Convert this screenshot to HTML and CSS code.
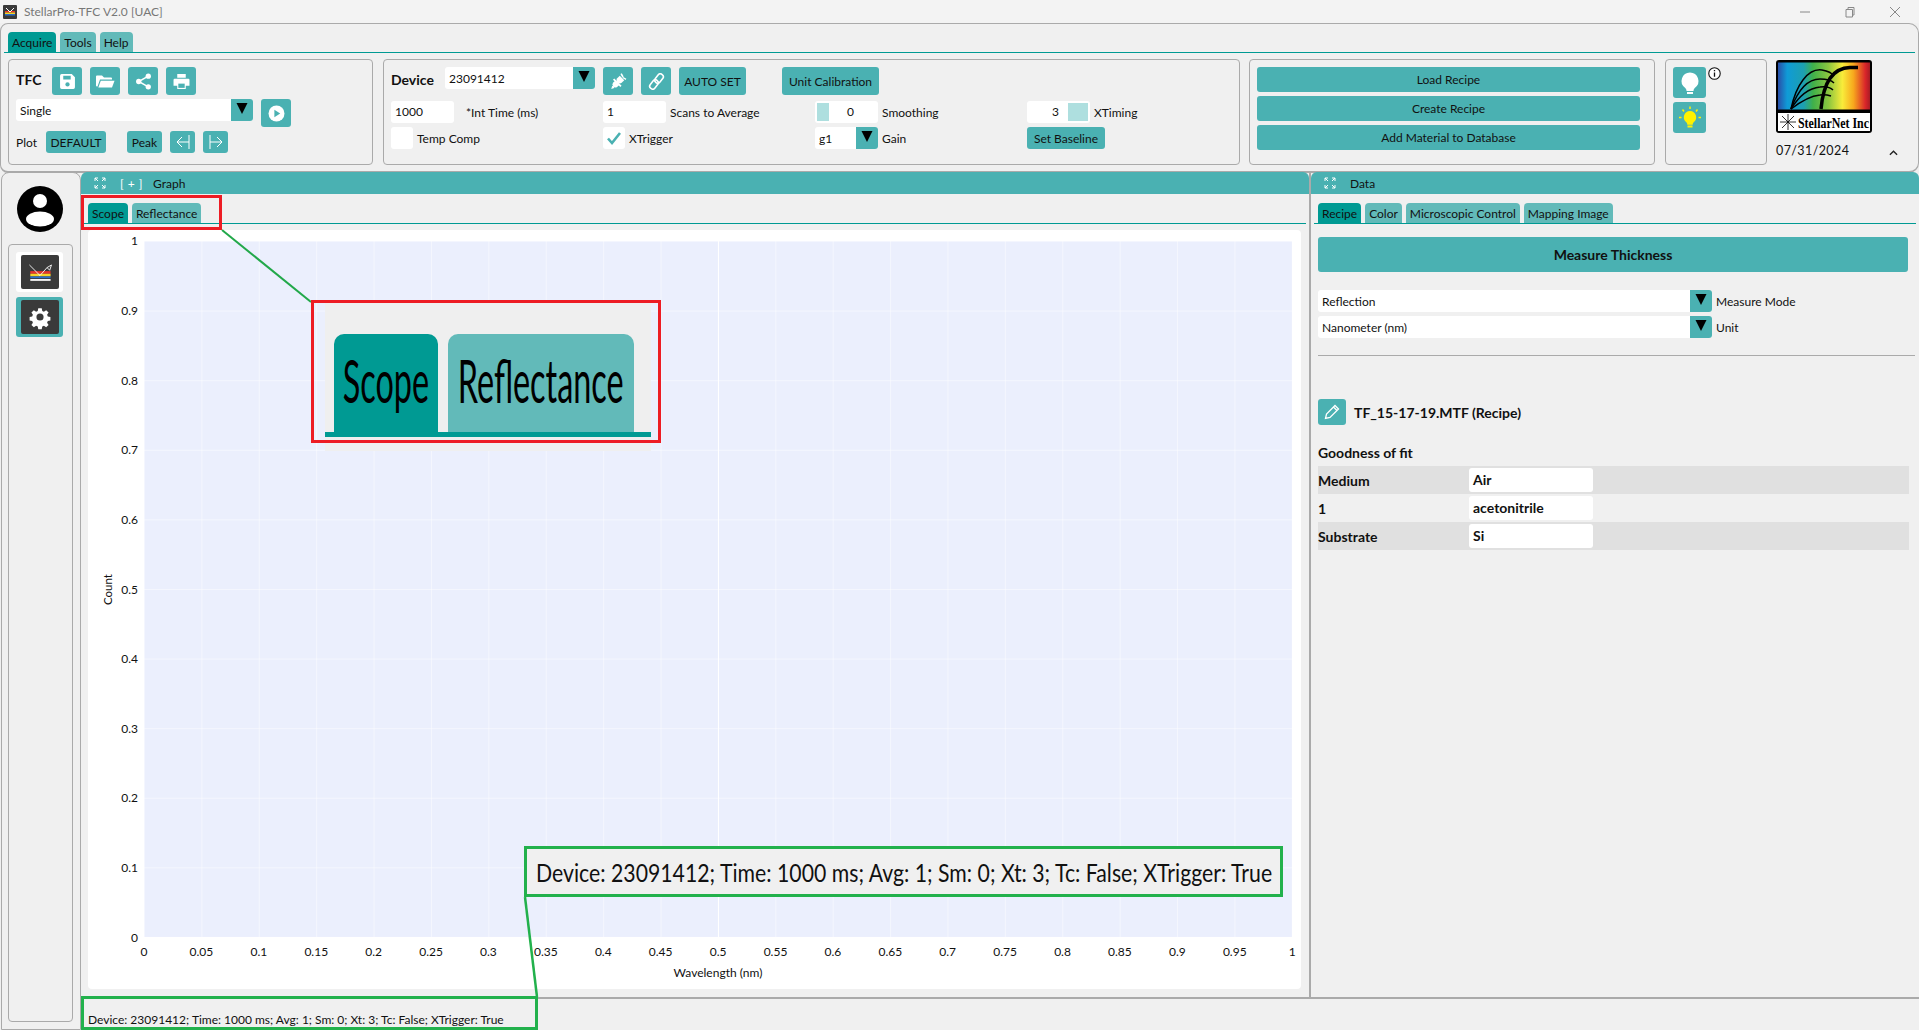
FILE: index.html
```html
<!DOCTYPE html>
<html lang="en">
<head>
    <meta charset="UTF-8">
    <title>StellarPro-TFC V2.0 [UAC]</title>
    <link rel="stylesheet" href="styles.css">
</head>
<body>
<svg class="defs" width="0" height="0">
    <symbol id="i-expand" viewBox="0 0 12 12">
        <path d="M1 4V1h3M8 1h3v3M1 8v3h3M11 8v3H8M1 1l3 3M11 1L8 4M1 11l3-3M11 11L8 8" fill="none" stroke="#fff" stroke-width="1"/>
    </symbol>
    <symbol id="i-down" viewBox="0 0 14 14">
        <path d="M1.500 2h11L7 13z" fill="#000"/>
    </symbol>
</svg>

<div class="titlebar">
    <svg class="app-icon" viewBox="0 0 14 14">
        <rect width="14" height="14" rx="1" fill="#3a3a3a"/>
        <rect x="2" y="6" width="10" height="1.500" fill="#e8352b"/>
        <rect x="2" y="7.500" width="10" height="1.500" fill="#f5d327"/>
        <rect x="2" y="9" width="10" height="1.500" fill="#2a6fc9"/>
        <path d="M3 3l4 4 4-4" fill="none" stroke="#fff" stroke-width="1"/>
    </svg>
    <span class="app-title">StellarPro-TFC V2.0 [UAC]</span>
    <div class="win-btns">
        <svg viewBox="0 0 12 12"><path d="M1 6h10" stroke="#888" fill="none"/></svg>
        <svg viewBox="0 0 12 12"><path d="M2 3.500h6.500V11H2zM4 3.500V1.500h6V9H8.500" stroke="#888" fill="none"/></svg>
        <svg viewBox="0 0 12 12"><path d="M1 1l10 10M11 1L1 11" stroke="#888" fill="none"/></svg>
    </div>
</div>

<div class="ribbon">
    <div class="tabbar ribbon-tabs">
        <div class="tab active">Acquire</div>
        <div class="tab">Tools</div>
        <div class="tab">Help</div>
    </div>
    <div class="ribbon-body">
        <!-- TFC group -->
        <div class="group group-tfc">
            <div class="row row-top">
                <span class="strong tfc-label">TFC</span>
                <button class="btn icon-btn"><svg viewBox="0 0 16 16"><path d="M1 2.500A1.500 1.500 0 0 1 2.500 1H12l3 3v9.500a1.500 1.500 0 0 1-1.500 1.500h-11A1.500 1.500 0 0 1 1 13.500zM4 2.500V6h7V2.500z" fill="#fff" fill-rule="evenodd"/><circle cx="8" cy="10.800" r="2" fill="#4ab1b2"/></svg></button>
                <button class="btn icon-btn"><svg class="wide" viewBox="0 0 20 16"><path d="M1 3a1 1 0 0 1 1-1h5l2 2h7a1 1 0 0 1 1 1v1H5L2.500 13H2a1 1 0 0 1-1-1z" fill="#fff"/><path d="M5.800 7.200H19.500L17 14H3.300z" fill="#fff"/></svg></button>
                <button class="btn icon-btn"><svg viewBox="0 0 16 16"><path d="M12.500 3L3.500 8l9 5" fill="none" stroke="#fff" stroke-width="1.400"/><circle cx="12.500" cy="3" r="2.500" fill="#fff"/><circle cx="3.500" cy="8" r="2.500" fill="#fff"/><circle cx="12.500" cy="13" r="2.500" fill="#fff"/></svg></button>
                <button class="btn icon-btn"><svg viewBox="0 0 16 16"><path d="M4 1h8v3.500H4zM1.500 5.500h13a1 1 0 0 1 1 1V12H12v3H4v-3H.5V6.500a1 1 0 0 1 1-1z" fill="#fff"/><rect x="5" y="10" width="6" height="4" fill="#4ab1b2"/></svg></button>
            </div>
            <div class="row row-mode">
                <div class="combo combo-mode"><span>Single</span><b class="combo-arrow"><svg><use href="#i-down"/></svg></b></div>
                <button class="btn icon-btn play-btn"><svg viewBox="0 0 16 16"><circle cx="8" cy="8" r="7.500" fill="#fff"/><path d="M6 4.500L11.500 8 6 11.500z" fill="#4ab1b2"/></svg></button>
            </div>
            <div class="row row-plot">
                <span class="plot-label">Plot</span>
                <button class="btn btn-default">DEFAULT</button>
                <button class="btn btn-peak">Peak</button>
                <button class="btn btn-step"><svg viewBox="0 0 16 16"><path d="M14 1v14M14 8H2M7 3L2 8l5 5" fill="none" stroke="#fff" stroke-width="1"/></svg></button>
                <button class="btn btn-step"><svg viewBox="0 0 16 16"><path d="M2 1v14M2 8h12M9 3l5 5-5 5" fill="none" stroke="#fff" stroke-width="1"/></svg></button>
            </div>
        </div>

        <!-- device group -->
        <div class="group group-device">
            <div class="row row-top">
                <span class="strong device-label">Device</span>
                <div class="combo combo-device"><span>23091412</span><b class="combo-arrow"><svg><use href="#i-down"/></svg></b></div>
                <button class="btn icon-btn plug-btn"><svg viewBox="0 0 16 16"><g fill="#fff"><path d="M9.200 2.600l4.200 4.200-2.400 2.400a3 3 0 0 1-4.200-4.200z"/><path d="M9.800 1l1.300-.7 1.800 2.900-1.300 1zM12.500 3.800l2.900 1.500-.7 1.300-3-1.800z"/><path d="M6.200 9.800l-2.600 2.600-1.600-.2-.8 2.800 2.800-.8-.2-1.600 2.700-2.600z"/><path d="M2.800 6.300l1.200-1.200 6.900 6.900-1.200 1.200zM4.500 7.500l4 4-1.800 1.600a2.800 2.800 0 0 1-3.900-3.900z"/></g></svg></button>
                <button class="btn icon-btn"><svg viewBox="0 0 16 16"><g fill="none" stroke="#fff" stroke-width="1.500"><rect x="7.600" y="0.400" width="5.500" height="9.500" rx="2.700" transform="rotate(38 10.300 5.200)"/><rect x="2.900" y="6.100" width="5.500" height="9.500" rx="2.700" transform="rotate(38 5.700 10.800)"/></g></svg></button>
                <button class="btn btn-autoset">AUTO SET</button>
                <button class="btn btn-unit">Unit Calibration</button>
            </div>
            <div class="param-grid">
                <div class="param"><span class="input input-int">1000</span><span class="param-label int-label">*Int Time (ms)</span></div>
                <div class="param"><span class="input">1</span><span class="param-label">Scans to Average</span></div>
                <div class="param"><span class="input spin spin-left"><i class="spin-handle handle-sm"></i><span>0</span></span><span class="param-label">Smoothing</span></div>
                <div class="param"><span class="input spin spin-right"><span>3</span><i class="spin-handle handle-xt"></i></span><span class="param-label">XTiming</span></div>

                <div class="param"><span class="check"></span><span class="param-label">Temp Comp</span></div>
                <div class="param"><span class="check"><svg viewBox="0 0 16 16"><path d="M2 8.500l4 4.500 8-10" fill="none" stroke="#4ab1b2" stroke-width="2.600"/></svg></span><span class="param-label">XTrigger</span></div>
                <div class="param"><div class="combo combo-gain"><span>g1</span><b class="combo-arrow"><svg><use href="#i-down"/></svg></b></div><span class="param-label">Gain</span></div>
                <div class="param"><button class="btn btn-baseline">Set Baseline</button></div>
            </div>
        </div>

        <!-- recipe group -->
        <div class="group group-recipe">
            <button class="btn btn-recipe">Load Recipe</button>
            <button class="btn btn-recipe">Create Recipe</button>
            <button class="btn btn-recipe">Add Material to Database</button>
        </div>

        <!-- lamp group -->
        <div class="group group-lamp">
            <div class="lamp-col">
                <button class="btn lamp-btn"><svg viewBox="0 0 24 24"><path d="M12 1.500a8.500 8.500 0 0 1 5 15.300c-1 .8-1.500 2-1.500 3.200h-7c0-1.200-.5-2.400-1.500-3.200A8.500 8.500 0 0 1 12 1.500z" fill="#fff"/><rect x="9" y="21" width="6" height="2" fill="#fff"/></svg></button>
                <button class="btn lamp-btn"><svg viewBox="0 0 24 24"><path d="M12 5a6.300 6.300 0 0 1 3.700 11.300c-.7.600-1 1.500-1 2.400H9.300c0-.9-.3-1.800-1-2.400A6.300 6.300 0 0 1 12 5z" fill="#fff200"/><rect x="9.500" y="19.500" width="5" height="2" fill="#fff200"/><path d="M12 .5v2.500M4.500 3.500l1.500 2M19.500 3.500L18 5.500M1 11.500h2.500M20.500 11.500H23" stroke="#fff200" stroke-width="1.500"/></svg></button>
            </div>
            <svg class="info-icon" viewBox="0 0 12 12"><circle cx="6" cy="6" r="5.300" fill="#fff" stroke="#111"/><path d="M6 5v4M6 2.800v1.200" stroke="#111" stroke-width="1.200"/></svg>
        </div>

        <div class="logo-col">
            <svg class="logo" viewBox="0 0 96 73">
                <defs>
                    <linearGradient id="rainbow">
                        <stop offset="0" stop-color="#2a4fa8"/>
                        <stop offset="0.1" stop-color="#0f9bd7"/>
                        <stop offset="0.28" stop-color="#1da0b0"/>
                        <stop offset="0.38" stop-color="#3fb04a"/>
                        <stop offset="0.55" stop-color="#8cc63f"/>
                        <stop offset="0.7" stop-color="#f8ec3a"/>
                        <stop offset="0.82" stop-color="#f7a81d"/>
                        <stop offset="0.95" stop-color="#d9252a"/>
                        <stop offset="1" stop-color="#a81c24"/>
                    </linearGradient>
                </defs>
                <rect width="96" height="73" rx="3" fill="#000"/>
                <rect x="2" y="2.500" width="92" height="47" fill="url(#rainbow)"/>
                <rect x="2" y="53" width="92" height="18" fill="#fff"/>
                <g fill="none" stroke="#000" stroke-width="1.500">
                    <path d="M15 49C20 25 32 8 46 10c6 1 10 3 12 6"/>
                    <path d="M15 49C22 30 32 19 44 19c7 0 11 1 14 4"/>
                    <path d="M15 49C23 36 33 28 44 27c6-1 10 0 13 3"/>
                    <path d="M15 49C24 42 34 36 44 35c5-1 8 0 11 1"/>
                </g>
                <path d="M45 49C47 27 54 8 74 7.500h8" fill="none" stroke="#000" stroke-width="3.500"/>
                <path d="M12 54v16M4 62h16M6 56l12 12M18 56L6 68" stroke="#000" stroke-width="0.800"/>
                <text x="22" y="68" class="logo-text" textLength="71" lengthAdjust="spacingAndGlyphs">StellarNet Inc</text>
            </svg>
            <div class="logo-foot">
                <span class="date">07/31/2024</span>
                <svg class="caret" viewBox="0 0 10 6"><path d="M1 5l4-4 4 4" fill="none" stroke="#222" stroke-width="1.500"/></svg>
            </div>
        </div>
    </div>
</div>

<div class="work">
    <div class="sidebar">
        <svg class="avatar" viewBox="0 0 46 46">
            <circle cx="23" cy="23" r="23" fill="#000"/>
            <circle cx="23" cy="15" r="7" fill="#fff" />
            <ellipse cx="23" cy="33" rx="14" ry="7.500" fill="#fff"/>
        </svg>
        <div class="side-group">
            <div class="side-tile">
                <div class="side-icon">
                    <svg viewBox="0 0 38 34">
                        <rect x="8" y="16" width="23" height="3" fill="#e8352b"/>
                        <rect x="8" y="19" width="23" height="3" fill="#f5d327"/>
                        <rect x="8" y="22" width="23" height="2" fill="#2a6fc9"/>
                        <rect x="8" y="25" width="23" height="2" fill="#fff"/>
                        <path d="M7 9l12 12 8-9M27 12l5-3-2 6z" fill="none" stroke="#fff" stroke-width="1"/>
                    </svg>
                </div>
            </div>
            <div class="side-tile selected">
                <div class="side-icon">
                    <svg viewBox="0 0 24 24"><path d="M10 2h4l.6 3 1.900.8 2.600-1.700 2.800 2.800-1.700 2.600.8 1.900 3 .6v4l-3 .6-.8 1.900 1.700 2.600-2.800 2.800-2.600-1.700-1.900.8-.6 3h-4l-.6-3-1.900-.8-2.600 1.700-2.800-2.800 1.700-2.600-.8-1.900-3-.6v-4l3-.6.8-1.900-1.700-2.600 2.800-2.800 2.600 1.700 1.900-.8z" transform="translate(2.400 2.400) scale(.8)" fill="#fff"/><circle cx="12" cy="12" r="3.300" fill="#3a3a3a"/></svg>
                </div>
            </div>
        </div>
    </div>

    <div class="content">
        <div class="panels">
            <div class="panel graph-panel">
                <div class="panel-head">
                    <svg class="expand"><use href="#i-expand"/></svg>
                    <span class="plus">[ + ]</span>
                    <span>Graph</span>
                </div>
                <div class="tabbar panel-tabs">
                    <div class="tab active">Scope</div>
                    <div class="tab">Reflectance</div>
                </div>
                <div class="plot">
                    <div class="y-title"><span>Count</span></div>
                    <div class="y-ticks">
                        <span>1</span><span>0.9</span><span>0.8</span><span>0.7</span><span>0.6</span><span>0.5</span>
                        <span>0.4</span><span>0.3</span><span>0.2</span><span>0.1</span><span>0</span>
                    </div>
                    <div class="plot-area"></div>
                    <div class="x-ticks">
                        <span>0</span><span>0.05</span><span>0.1</span><span>0.15</span><span>0.2</span><span>0.25</span><span>0.3</span>
                        <span>0.35</span><span>0.4</span><span>0.45</span><span>0.5</span><span>0.55</span><span>0.6</span><span>0.65</span>
                        <span>0.7</span><span>0.75</span><span>0.8</span><span>0.85</span><span>0.9</span><span>0.95</span><span>1</span>
                    </div>
                    <div class="x-title">Wavelength (nm)</div>
                </div>
            </div>

            <div class="panel data-panel">
                <div class="panel-head">
                    <svg class="expand"><use href="#i-expand"/></svg>
                    <span>Data</span>
                </div>
                <div class="tabbar panel-tabs">
                    <div class="tab active">Recipe</div>
                    <div class="tab">Color</div>
                    <div class="tab">Microscopic Control</div>
                    <div class="tab">Mapping Image</div>
                </div>
                <div class="data-body">
                    <button class="btn btn-measure">Measure Thickness</button>
                    <div class="data-field">
                        <div class="combo combo-wide"><span>Reflection</span><b class="combo-arrow"><svg><use href="#i-down"/></svg></b></div>
                        <span class="param-label">Measure Mode</span>
                    </div>
                    <div class="data-field">
                        <div class="combo combo-wide"><span>Nanometer (nm)</span><b class="combo-arrow"><svg><use href="#i-down"/></svg></b></div>
                        <span class="param-label">Unit</span>
                    </div>
                    <div class="separator"></div>
                    <div class="recipe-title">
                        <button class="btn edit-btn"><svg viewBox="0 0 16 16"><path d="M11 1.500l3.500 3.500-8.500 8.500-4.500 1 1-4.500zM9.500 3l3.500 3.500" fill="none" stroke="#fff" stroke-width="1.300"/></svg></button>
                        <span class="strong">TF_15-17-19.MTF (Recipe)</span>
                    </div>
                    <div class="fit-title strong">Goodness of fit</div>
                    <div class="layer-row shaded"><span class="layer-name">Medium</span><span class="layer-value">Air</span></div>
                    <div class="layer-row"><span class="layer-name">1</span><span class="layer-value">acetonitrile</span></div>
                    <div class="layer-row shaded"><span class="layer-name">Substrate</span><span class="layer-value">Si</span></div>
                </div>
            </div>
        </div>
        <div class="statusbar">Device: 23091412; Time: 1000 ms; Avg: 1; Sm: 0; Xt: 3; Tc: False; XTrigger: True</div>
    </div>
</div>

<!-- annotations drawn over the screenshot -->
<svg class="leaders" viewBox="0 0 1919 1030">
    <path d="M222 230L311 302" stroke="#22a84a" stroke-width="2"/>
    <path d="M525 897L537 997" stroke="#22b14c" stroke-width="2.500"/>
</svg>
<div class="mark mark-red mark-tabs"></div>
<div class="mark mark-green mark-status"></div>

<div class="zoom-tabs">
    <div class="zoom-frame">
        <div class="zoom-tab active"><span>Scope</span></div>
        <div class="zoom-tab refl"><span>Reflectance</span></div>
    </div>
</div>
<div class="mark mark-red mark-zoom"></div>
<div class="mark mark-green zoom-status"><span>Device: 23091412; Time: 1000 ms; Avg: 1; Sm: 0; Xt: 3; Tc: False; XTrigger: True</span></div>
</body>
</html>
```

FILE: styles.css
```css
* {
    box-sizing: border-box;
}

body {
    margin: 0;
    width: 1919px;
    height: 1030px;
    position: relative;
    overflow: hidden;
    display: flex;
    flex-direction: column;
    background: #f0f0f0;
    font-family: Lato, "Liberation Sans", sans-serif;
    font-size: 12px;
    color: #111;
}

.defs {
    position: absolute;
}

button {
    font: inherit;
    color: inherit;
    padding: 0;
    border: none;
}

.strong {
    font-weight: 700;
    font-size: 14px;
}

/* title bar */
.titlebar {
    height: 23px;
    flex: none;
    display: flex;
    align-items: center;
    padding-left: 3px;
    background: #f3f3f3;
}

.app-icon {
    width: 14px;
    height: 14px;
}

.app-title {
    margin-left: 7px;
    color: #777;
}

.win-btns {
    margin-left: auto;
    display: flex;
    gap: 33px;
    padding-right: 18px;
}

.win-btns svg {
    width: 12px;
    height: 12px;
}

/* ribbon */
.ribbon {
    height: 150px;
    flex: none;
    border: 1px solid #aaa;
    border-bottom-width: 2px;
    border-radius: 8px 10px 10px 8px;
    padding-top: 8px;
}

.tabbar {
    display: flex;
    gap: 4px;
    height: 21px;
    border-bottom: 1.500px solid #009a93;
}

.ribbon-tabs {
    margin: 0 3px;
    padding-left: 4px;
}

.tab {
    height: 20px;
    padding: 0 4px;
    display: flex;
    align-items: center;
    background: #62bab9;
    border-radius: 4px 4px 0 0;
}

.tab.active {
    background: #009a93;
}

.ribbon-body {
    display: flex;
    margin: 6px 0 0 7px;
}

.group {
    height: 106px;
    border: 1px solid #aaa;
    border-radius: 4px;
    padding: 7px;
    flex: none;
}

.row {
    display: flex;
    align-items: flex-start;
}

.btn {
    background: #4ab1b2;
    border-radius: 3px;
    display: flex;
    align-items: center;
    justify-content: center;
    flex: none;
}

.icon-btn {
    width: 30px;
    height: 28px;
    margin-right: 8px;
}

.icon-btn svg {
    width: 17px;
    height: 17px;
}

.icon-btn svg.wide {
    width: 20px;
}

.group-tfc {
    width: 365px;
    margin-right: 10px;
}

.tfc-label {
    width: 36px;
    line-height: 26px;
}

.combo {
    display: flex;
    align-items: center;
    height: 22px;
    background: #fff;
    border-radius: 3px;
    padding-left: 4px;
    overflow: hidden;
    flex: none;
}

.combo span {
    flex: 1;
}

.combo-arrow {
    width: 22px;
    height: 22px;
    margin-left: auto;
    background: #4ab1b2;
    display: flex;
    justify-content: center;
    padding-top: 2px;
}

.combo-arrow svg {
    width: 14px;
    height: 14px;
}

.combo-mode {
    width: 237px;
}

.row-mode {
    margin-top: 4px;
}

.play-btn {
    margin: 0 0 0 8px;
}

.row-plot {
    margin-top: 4px;
    align-items: center;
}

.plot-label {
    width: 30px;
}

.btn-default {
    width: 60px;
    height: 22px;
}

.btn-peak {
    width: 35px;
    height: 22px;
    margin-left: 21px;
}

.btn-step {
    width: 25px;
    height: 22px;
    margin-left: 8px;
}

.btn-step svg {
    width: 16px;
    height: 16px;
}

.btn-peak + .btn-step {
    margin-left: 8px;
}

.group-device {
    width: 857px;
    margin-right: 9px;
}

.device-label {
    width: 54px;
    line-height: 26px;
}

.combo-device {
    width: 150px;
    margin-right: 8px;
}

.btn-autoset {
    width: 67px;
    height: 28px;
}

.btn-unit {
    width: 97px;
    height: 28px;
    margin-left: 36px;
}

.param-grid {
    display: grid;
    grid-template-columns: repeat(4, 212px);
    grid-template-rows: 22px 22px;
    row-gap: 4px;
    margin-top: 6px;
}

.param {
    display: flex;
    align-items: center;
}

.input {
    width: 63px;
    height: 22px;
    background: #fff;
    border-radius: 3px;
    padding-left: 4px;
    line-height: 22px;
    flex: none;
}

.param-label {
    margin-left: 4px;
}

.int-label {
    margin-left: 12px;
}

.spin {
    display: flex;
    align-items: stretch;
    padding: 2px;
    line-height: 18px;
}

.spin span {
    flex: 1;
}

.spin-left span {
    text-align: center;
    padding-right: 4px;
}

.spin-right span {
    text-align: right;
    padding-right: 9px;
}

.spin-handle {
    background: #aedfdf;
}

.handle-sm {
    width: 12px;
}

.handle-xt {
    width: 20px;
}

.check {
    width: 22px;
    height: 22px;
    background: #fff;
    border-radius: 3px;
    display: flex;
    align-items: center;
    justify-content: center;
    flex: none;
}

.check svg {
    width: 16px;
    height: 16px;
}

.check + .param-label {
    margin-left: 4px;
}

.combo-gain {
    width: 63px;
}

.btn-baseline {
    width: 78px;
    height: 22px;
}

.group-recipe {
    width: 406px;
    margin-right: 10px;
    display: flex;
    flex-direction: column;
    gap: 4px;
}

.btn-recipe {
    width: 383px;
    height: 25px;
}

.group-lamp {
    width: 102px;
    margin-right: 9px;
    display: flex;
    align-items: flex-start;
}

.lamp-col {
    display: flex;
    flex-direction: column;
    gap: 4px;
}

.lamp-btn {
    width: 33px;
    height: 31px;
}

.lamp-btn svg {
    width: 24px;
    height: 24px;
}

.info-icon {
    width: 13px;
    height: 13px;
    margin-left: 2px;
}

.logo-col {
    width: 128px;
    padding-top: 1px;
}

.logo {
    width: 96px;
    height: 73px;
    display: block;
}

.logo-text {
    font-family: "Liberation Serif", serif;
    font-size: 14px;
    font-weight: 700;
    fill: #000;
}

.logo-foot {
    display: flex;
    align-items: center;
    justify-content: space-between;
    margin-top: 10px;
    padding-right: 6px;
    letter-spacing: 0.4px;
    font-size: 12.500px;
}

.caret {
    width: 9px;
    height: 6px;
    margin-top: 4px;
}

/* main area */
.work {
    flex: 1;
    display: flex;
    min-height: 0;
    margin-top: -1px;
}

.sidebar {
    width: 80px;
    flex: none;
    margin-left: 1px;
    border: 1px solid #aaa;
    border-radius: 8px 8px 0 0;
    padding: 13px 7px 7px 6px;
    display: flex;
    flex-direction: column;
}

.avatar {
    width: 46px;
    height: 46px;
    margin-left: 9px;
    flex: none;
}

.side-group {
    flex: 1;
    margin-top: 12px;
    border: 1px solid #aaa;
    border-radius: 4px;
    padding: 7px 7px;
    display: flex;
    flex-direction: column;
    gap: 5px;
}

.side-tile {
    width: 47px;
    height: 40px;
    background: #fff;
    border-radius: 3px;
    display: flex;
    align-items: center;
    justify-content: center;
}

.side-tile.selected {
    background: #4ab1b2;
}

.side-icon {
    width: 38px;
    height: 34px;
    background: #3a3a3a;
    border-radius: 2px;
    display: flex;
    align-items: center;
    justify-content: center;
}

.side-icon svg {
    width: 34px;
    height: 30px;
}

.selected .side-icon svg {
    width: 26px;
    height: 26px;
}

.content {
    flex: 1;
    min-width: 0;
    display: flex;
    flex-direction: column;
}

.panels {
    height: 827px;
    flex: none;
    display: flex;
    border-bottom: 2.500px solid #aaa;
}

.panel {
    min-width: 0;
}

.graph-panel {
    width: 1230px;
    border-right: 2px solid #aaa;
}

.data-panel {
    flex: 1;
}

.panel-head {
    height: 22px;
    background: #4ab1b2;
    border-radius: 6px 6px 0 0;
    display: flex;
    align-items: center;
    padding-left: 13px;
}

.expand {
    width: 12px;
    height: 12px;
    margin-right: 14px;
}

.plus {
    color: #fff;
    width: 33px;
    letter-spacing: 0.5px;
}

.panel-tabs {
    margin: 9px 0 0 3px;
    padding-left: 4px;
    height: 21px;
    margin-right: 3px;
}

/* plot */
.plot {
    margin: 6px 8px 0 7px;
    height: 759px;
    background: #fff;
    border-radius: 4px;
    display: grid;
    grid-template-columns: 30px 26px 1148px;
    grid-template-rows: 11px 696px 27px 1fr;
}

.y-title {
    grid-column: 1;
    grid-row: 2;
    display: flex;
    align-items: center;
    justify-content: flex-end;
}

.y-title span {
    writing-mode: vertical-rl;
    transform: rotate(180deg);
    margin-right: 4px;
    font-size: 11.500px;
}

.y-ticks {
    grid-column: 2;
    grid-row: 2;
    margin: -35px 0;
    display: flex;
    flex-direction: column;
}

.y-ticks span {
    flex: 1;
    display: flex;
    align-items: center;
    justify-content: flex-end;
    padding-right: 6px;
}

.plot-area {
    grid-column: 3;
    grid-row: 2;
    position: relative;
    background-color: #ebeffd;
    background-image:
        linear-gradient(to right, rgba(255, 255, 255, 0.45) 1px, transparent 1px),
        linear-gradient(to bottom, rgba(255, 255, 255, 0.45) 1px, transparent 1px);
    background-size: 5% 100%, 100% 10%;
}

.plot-area::after {
    content: "";
    position: absolute;
    left: 50%;
    top: 0;
    bottom: 0;
    width: 1px;
    background: #fff;
}

.x-ticks {
    grid-column: 3;
    grid-row: 3;
    margin: 0 -28.700px;
    display: flex;
    align-items: center;
    padding-top: 2px;
}

.x-ticks span {
    flex: 1;
    text-align: center;
}

.x-title {
    grid-column: 3;
    grid-row: 4;
    text-align: center;
    padding-top: 1px;
}

/* data panel */
.data-body {
    padding: 13px 8px 0 7px;
}

.btn-measure {
    width: 590px;
    height: 35px;
    font-weight: 700;
    font-size: 14px;
    margin-bottom: 18px;
}

.data-field {
    display: flex;
    align-items: center;
    margin-bottom: 4px;
}

.combo-wide {
    width: 394px;
}

.separator {
    height: 1px;
    background: #aaa;
    margin: 17px -4px 43px 0;
}

.recipe-title {
    display: flex;
    align-items: center;
    gap: 8px;
}

.edit-btn {
    width: 28px;
    height: 26px;
}

.edit-btn svg {
    width: 16px;
    height: 16px;
}

.fit-title {
    margin-top: 19px;
    height: 22px;
    line-height: 18px;
}

.layer-row {
    height: 28px;
    width: 591px;
    display: flex;
    align-items: center;
    font-weight: 700;
    font-size: 14px;
}

.layer-row.shaded {
    background: #e0e0e0;
}

.layer-name {
    width: 151px;
}

.layer-value {
    width: 124px;
    height: 24px;
    line-height: 24px;
    background: #fff;
    border-radius: 3px;
    padding-left: 4px;
}

.statusbar {
    flex: 1;
    padding: 13px 0 0 7px;
    font-size: 12px;
}

/* annotations */
.leaders {
    position: absolute;
    left: 0;
    top: 0;
    width: 1919px;
    height: 1030px;
}

.mark {
    position: absolute;
    border: 3px solid #ed1c24;
}

.mark-green {
    border-color: #22b14c;
}

.mark-tabs {
    left: 81px;
    top: 195px;
    width: 141px;
    height: 35px;
}

.mark-status {
    left: 81px;
    top: 996px;
    width: 457px;
    height: 34px;
}

.mark-zoom {
    left: 311px;
    top: 300px;
    width: 350px;
    height: 143px;
}

.zoom-tabs {
    position: absolute;
    left: 325px;
    top: 303px;
    width: 326px;
    height: 148px;
    background: #efefef;
}

.zoom-frame {
    position: absolute;
    left: 0;
    right: 0;
    top: 31px;
    height: 103px;
    border-bottom: 5px solid #009a93;
    display: flex;
    padding-left: 9px;
    gap: 10px;
}

.zoom-tab {
    width: 104px;
    height: 98px;
    background: #009a93;
    border-radius: 10px 10px 0 0;
    display: flex;
    justify-content: center;
    overflow: hidden;
}

.zoom-tab.refl {
    width: 186px;
    background: #62bab9;
}

.zoom-tab span {
    font-size: 60px;
    line-height: 92px;
    transform: scaleX(0.54);
    color: #000;
    white-space: nowrap;
}

.zoom-status {
    left: 524px;
    top: 846px;
    width: 759px;
    height: 51px;
    background: #f0f0f0;
    display: flex;
    align-items: center;
    padding-left: 9px;
    overflow: hidden;
}

.zoom-status span {
    font-size: 25px;
    white-space: nowrap;
    transform-origin: left center;
    transform: scaleX(0.85);
}
```
